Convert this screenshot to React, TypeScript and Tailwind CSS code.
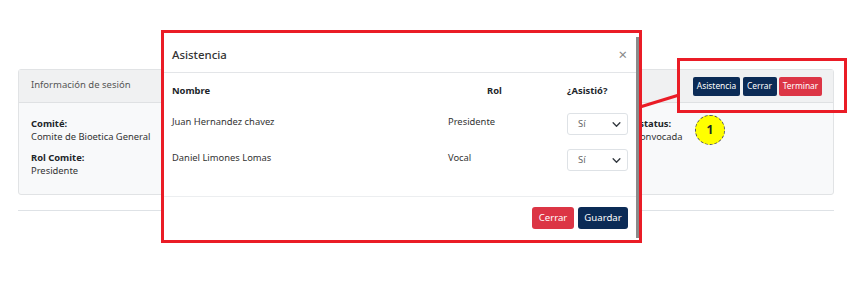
import React from 'react';

const ChevronDown = () => (
  <svg width="9" height="9" viewBox="0 0 16 16" fill="none" stroke="#343a40" strokeWidth="2.4" strokeLinecap="round" strokeLinejoin="round">
    <path d="M2 5l6 6 6-6" />
  </svg>
);

const attendees = [
  { name: 'Juan Hernandez chavez', rol: 'Presidente' },
  { name: 'Daniel Limones Lomas', rol: 'Vocal' },
];

const App = () => {
  return (
    <div className="relative w-[860px] h-[284px] bg-white overflow-hidden text-[#212529]" style={{ fontFamily: '"Noto Sans", "Open Sans", sans-serif' }}>
      <div className="pt-[69px] pl-[18px] pr-[26px]">
        <div className="border border-[#e1e3e5] rounded-[3px] bg-[#f8f9fa] h-[126px]">
          <div className="h-[33px] flex items-center justify-between bg-[#f0f1f2] border-b border-[#dfe1e3] pl-[12px] pr-[11px]">
            <span className="text-[9.5px] text-[#555] -mt-[2px]">Información de sesión</span>
            <div className="flex gap-[2.5px]">
              <button className="h-[19px] w-[47px] rounded-[2px] bg-[#0b2b56] text-white text-[8.4px]">Asistencia</button>
              <button className="h-[19px] w-[34px] rounded-[2px] bg-[#0b2b56] text-white text-[8.4px]">Cerrar</button>
              <button className="h-[19px] w-[43px] rounded-[2px] bg-[#dc3545] text-white text-[8.4px]">Terminar</button>
            </div>
          </div>
          <div className="flex pl-[12px] pt-[14px] text-[9.4px] leading-[13px]">
            <div className="w-[603px]">
              <div className="font-bold">Comité:</div>
              <div className="text-[#333]">Comite de Bioetica General</div>
              <div className="font-bold mt-[8px]">Rol Comite:</div>
              <div className="text-[#333]">Presidente</div>
            </div>
            <div>
              <div className="font-bold">Estatus:</div>
              <div className="text-[#333]">Convocada</div>
            </div>
          </div>
        </div>
        <div className="mt-[15px] border-t border-[#dee2e6]" />
      </div>

      {/* modal */}
      <div className="absolute left-[161px] top-[30px] w-[481px] h-[213px] border-[3px] border-[#ea1c26] bg-white">
        <div className="absolute right-0 top-[4px] bottom-[2px] w-[3px] bg-[#8a8a8a]" />
        <div className="h-[40px] flex items-center justify-between pl-[8px] pr-[12px] pt-[4px] border-b border-[#e3e5e8]">
          <span className="text-[11.4px] font-medium text-[#333]">Asistencia</span>
          <span className="text-[15px] text-[#888] leading-none">×</span>
        </div>
        <div className="pl-[8px] pt-[11px] text-[9.4px]">
          <div className="grid grid-cols-[276px_119px_61px] font-bold h-[23px] leading-[14px]">
            <div>Nombre</div>
            <div className="pl-[39px]">Rol</div>
            <div>¿Asistió?</div>
          </div>
          {attendees.map((a) => (
            <div key={a.name} className="grid grid-cols-[276px_119px_61px] h-[36px] pt-[5px] text-[#333]">
              <div className="pt-[3px]">{a.name}</div>
              <div className="pt-[3px]">{a.rol}</div>
              <div className="mt-[1px] h-[22px] border border-[#dee2e6] rounded-[3px] flex items-center justify-between pl-[10px] pr-[6px] text-[#666]">
                <span>Sí</span>
                <ChevronDown />
              </div>
            </div>
          ))}
        </div>
        <div className="mt-[17px] border-t border-[#eceef0] flex justify-end gap-[4px] pt-[10px] pr-[11px]">
          <button className="h-[22px] w-[42px] rounded-[3px] bg-[#dc3545] text-white text-[9.6px]">Cerrar</button>
          <button className="h-[22px] w-[50px] rounded-[3px] bg-[#0b2b56] text-white text-[9.6px]">Guardar</button>
        </div>
      </div>

      {/* annotations */}
      <div className="absolute left-[677px] top-[58px] w-[170px] h-[55px] border-[3px] border-[#ea1c26]" />
      <svg className="absolute left-0 top-0" width="860" height="284">
        <line x1="640" y1="107" x2="679" y2="95" stroke="#ea1c26" strokeWidth="3" />
      </svg>
      <div className="absolute left-[695px] top-[115px] w-[30px] h-[30px] rounded-full bg-[#ffff00] border border-dashed border-[#555] flex items-center justify-center text-[12px] font-bold">1</div>
    </div>
  );
};

export default App;
